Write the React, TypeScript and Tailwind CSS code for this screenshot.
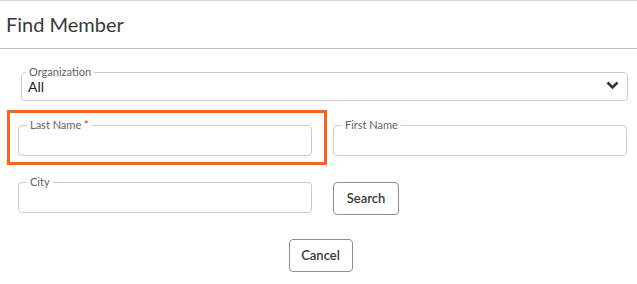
import React from 'react';

// Outlined text field with the label sitting in the top border
const Field: React.FC<{ label: string; required?: boolean }> = ({ label, required }) => (
  <fieldset className="h-[37px] rounded-[4px] border border-[#c9cbcf] px-[8px]">
    <legend className="px-[3px] text-[11px] leading-[12px] text-[#5f6368]">
      {label}
      {required && <span className="text-[#e5262b]"> *</span>}
    </legend>
  </fieldset>
);

const App: React.FC = () => {
  return (
    <div className="h-[284px] w-full border-t border-[#d6d6d6] bg-white font-['Lato',sans-serif] text-[#333]">
      {/* Title bar */}
      <div className="h-[48px] border-b border-[#bdbdbd] pl-[6px] pt-[11px] text-[20px] leading-[24px] text-[#3a3a3a]">
        Find Member
      </div>

      <div className="pl-[18px] pr-[10px]">
        {/* Organization select */}
        <fieldset className="mt-[17px] ml-[3px] mr-[-1px] h-[35px] rounded-[4px] border border-[#c9cbcf] pl-[4px] pr-[8px]">
          <legend className="px-[3px] text-[11px] leading-[12px] text-[#5f6368]">Organization</legend>
          <div className="flex items-center justify-between pl-[2px]">
            <span className="text-[14px] leading-[17px] text-[#222]">All</span>
            <svg width="13" height="9" viewBox="0 0 13 9" className="mt-[-2px]">
              <polyline points="1.5,1.5 6.5,6.5 11.5,1.5" fill="none" stroke="#2f3541" strokeWidth="2.6" />
            </svg>
          </div>
        </fieldset>

        <div className="mt-[18px] grid grid-cols-2 gap-x-[21px]">
          <div className="relative">
            <Field label="Last Name" required />
            {/* highlight around required field */}
            <div className="pointer-events-none absolute -left-[11px] -top-[9px] h-[55px] w-[320px] border-[3px] border-[#f4661b]" />
          </div>
          <Field label="First Name" />
        </div>

        <div className="mt-[20px] grid grid-cols-2 gap-x-[21px]">
          <Field label="City" />
          <div className="pt-[6px]">
            <button className="h-[33px] w-[66px] rounded-[4px] border border-[#8c8f99] text-[13px] font-semibold text-[#3a3a3a]">
              Search
            </button>
          </div>
        </div>

        <div className="mt-[24px] flex justify-center pr-[4px]">
          <button className="h-[33px] w-[64px] rounded-[4px] border border-[#8c8f99] text-[13px] font-semibold text-[#3a3a3a]">
            Cancel
          </button>
        </div>
      </div>
    </div>
  );
};

export default App;
